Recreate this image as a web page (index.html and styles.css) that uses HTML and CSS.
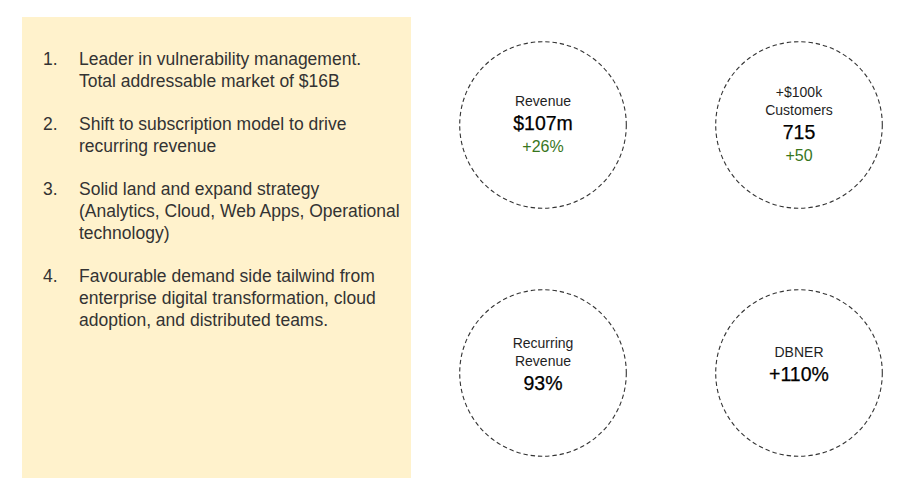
FILE: index.html
```html
<!DOCTYPE html>
<html lang="en">
<head>
<meta charset="utf-8">
<title>Highlights</title>
<link rel="stylesheet" href="styles.css">
</head>
<body>
<main class="slide">
  <section class="panel">
    <ol class="points">
      <li class="point"><span class="num">1.</span><span class="txt">Leader in vulnerability management.<br>Total addressable market of $16B</span></li>
      <li class="point"><span class="num">2.</span><span class="txt">Shift to subscription model to drive<br>recurring revenue</span></li>
      <li class="point"><span class="num">3.</span><span class="txt">Solid land and expand strategy<br>(Analytics, Cloud, Web Apps, Operational<br>technology)</span></li>
      <li class="point"><span class="num">4.</span><span class="txt">Favourable demand side tailwind from<br>enterprise digital transformation, cloud<br>adoption, and distributed teams.</span></li>
    </ol>
  </section>
  <section class="metrics">
    <div class="circle">
      <div class="label">Revenue</div>
      <div class="value">$107m</div>
      <div class="change">+26%</div>
    </div>
    <div class="circle">
      <div class="label">+$100k<br>Customers</div>
      <div class="value">715</div>
      <div class="change">+50</div>
    </div>
    <div class="circle">
      <div class="label">Recurring<br>Revenue</div>
      <div class="value">93%</div>
      <div class="change empty">&nbsp;</div>
    </div>
    <div class="circle">
      <div class="label">DBNER</div>
      <div class="value">+110%</div>
      <div class="change empty">&nbsp;</div>
    </div>
  </section>
</main>
</body>
</html>
```

FILE: styles.css
```css
html, body {
  margin: 0;
  padding: 0;
  background: #ffffff;
}

.slide {
  display: flex;
  align-items: flex-start;
  width: 912px;
  height: 497px;
  overflow: hidden;
}

.panel {
  box-sizing: border-box;
  width: 389px;
  height: 461px;
  margin: 17px 0 0 22px;
  padding: 31px 0 0 21px;
  background: #fff2cc;
  font-family: "Liberation Sans", Arial, sans-serif;
  font-size: 17.5px;
  line-height: 22px;
  color: #333333;
}

.points {
  list-style: none;
  margin: 0;
  padding: 0;
  display: flex;
  flex-direction: column;
  gap: 21px;
}

.point {
  display: flex;
}

.num {
  width: 36px;
  flex: none;
}

.txt {
  white-space: nowrap;
}

.metrics {
  display: grid;
  grid-template-columns: 168px 168px;
  grid-auto-rows: 168px;
  column-gap: 88px;
  row-gap: 80px;
  margin: 41px 0 0 48px;
}

.circle {
  box-sizing: border-box;
  width: 168px;
  height: 168px;
  background-image: url("data:image/svg+xml,%3Csvg xmlns='http://www.w3.org/2000/svg' width='168' height='168' viewBox='0 0 168 168'%3E%3Ccircle cx='84' cy='84' r='83.3' fill='none' stroke='%23333333' stroke-width='1.1' stroke-dasharray='4.4 2.9'/%3E%3C/svg%3E");
  background-repeat: no-repeat;
  background-size: 168px 168px;
  display: flex;
  flex-direction: column;
  align-items: center;
  justify-content: center;
  text-align: center;
  font-family: "Liberation Sans", Arial, sans-serif;
  color: #1f1f1f;
}

.label {
  font-size: 14px;
  line-height: 18px;
}

.value {
  font-size: 19.5px;
  line-height: 26px;
  color: #000000;
  -webkit-text-stroke: 0.25px #000000;
}

.change {
  font-size: 16px;
  line-height: 22px;
  color: #38761d;
}

.change.empty {
  line-height: 16px;
}
```
